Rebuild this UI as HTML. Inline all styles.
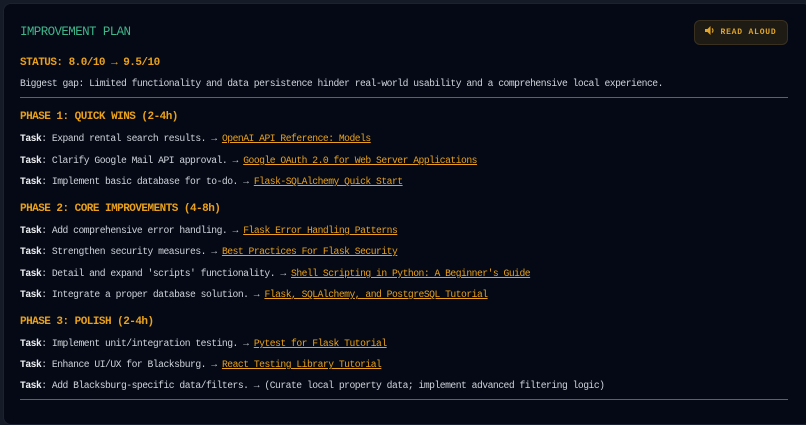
<!DOCTYPE html>
<html><head><style>
html,body{margin:0;width:806px;height:403px;overflow:hidden;}
body{background:#151b27;font-family:"Liberation Mono",monospace;}
.p{position:absolute;left:3px;top:3px;width:806px;height:420px;background:#050915;border-radius:8px;border:1px solid #1c2232;}
.t{position:absolute;left:16px;white-space:nowrap;line-height:12px;}
.h1{color:#3fb68a;font-size:12.5px;letter-spacing:-0.6px;}
.h{color:#e9a11c;font-size:11px;font-weight:bold;letter-spacing:-0.53px;}
.x{color:#cfd3da;font-size:9.7px;letter-spacing:-0.5px;}
.x b{color:#eef0f3;}
a{color:#e9a11c;text-decoration:underline;}
.hr{position:absolute;left:16px;width:768px;height:1px;background:#5a6170;}
.btn{position:absolute;left:690px;top:16px;width:92px;height:23px;border-radius:6px;background:#1e1a14;border:1px solid #3a3020;color:#e0a52a;font-size:8px;font-weight:bold;letter-spacing:0.8px;line-height:23px;text-align:center;}
</style></head><body>
<div class="p">
<div class="t h1" style="top:22px">IMPROVEMENT PLAN</div>
<div class="btn"><svg width="10" height="9" viewBox="0 0 10 9" style="vertical-align:-1px;margin-right:5px"><path d="M0 3h2.5l3-3v9l-3-3H0z" fill="#e0a52a"/><path d="M7 2.5a2.5 2.5 0 010 4" stroke="#e0a52a" stroke-width="1.2" fill="none"/></svg>READ ALOUD</div>
<div class="t h" style="top:53px">STATUS: 8.0/10 → 9.5/10</div>
<div class="t x" style="top:74px">Biggest gap: Limited functionality and data persistence hinder real-world usability and a comprehensive local experience.</div>
<div class="hr" style="top:93px"></div>
<div class="t h" style="top:107px">PHASE 1: QUICK WINS (2-4h)</div>
<div class="t x" style="top:129px"><b>Task</b>: Expand rental search results. → <a>OpenAI API Reference: Models</a></div>
<div class="t x" style="top:151px"><b>Task</b>: Clarify Google Mail API approval. → <a>Google OAuth 2.0 for Web Server Applications</a></div>
<div class="t x" style="top:172px"><b>Task</b>: Implement basic database for to-do. → <a>Flask-SQLAlchemy Quick Start</a></div>
<div class="t h" style="top:199px">PHASE 2: CORE IMPROVEMENTS (4-8h)</div>
<div class="t x" style="top:221px"><b>Task</b>: Add comprehensive error handling. → <a>Flask Error Handling Patterns</a></div>
<div class="t x" style="top:242px"><b>Task</b>: Strengthen security measures. → <a>Best Practices For Flask Security</a></div>
<div class="t x" style="top:264px"><b>Task</b>: Detail and expand 'scripts' functionality. → <a>Shell Scripting in Python: A Beginner's Guide</a></div>
<div class="t x" style="top:285px"><b>Task</b>: Integrate a proper database solution. → <a>Flask, SQLAlchemy, and PostgreSQL Tutorial</a></div>
<div class="t h" style="top:312px">PHASE 3: POLISH (2-4h)</div>
<div class="t x" style="top:334px"><b>Task</b>: Implement unit/integration testing. → <a>Pytest for Flask Tutorial</a></div>
<div class="t x" style="top:355px"><b>Task</b>: Enhance UI/UX for Blacksburg. → <a>React Testing Library Tutorial</a></div>
<div class="t x" style="top:376px"><b>Task</b>: Add Blacksburg-specific data/filters. → (Curate local property data; implement advanced filtering logic)</div>
<div class="hr" style="top:395px"></div>
</div>
</body></html>
